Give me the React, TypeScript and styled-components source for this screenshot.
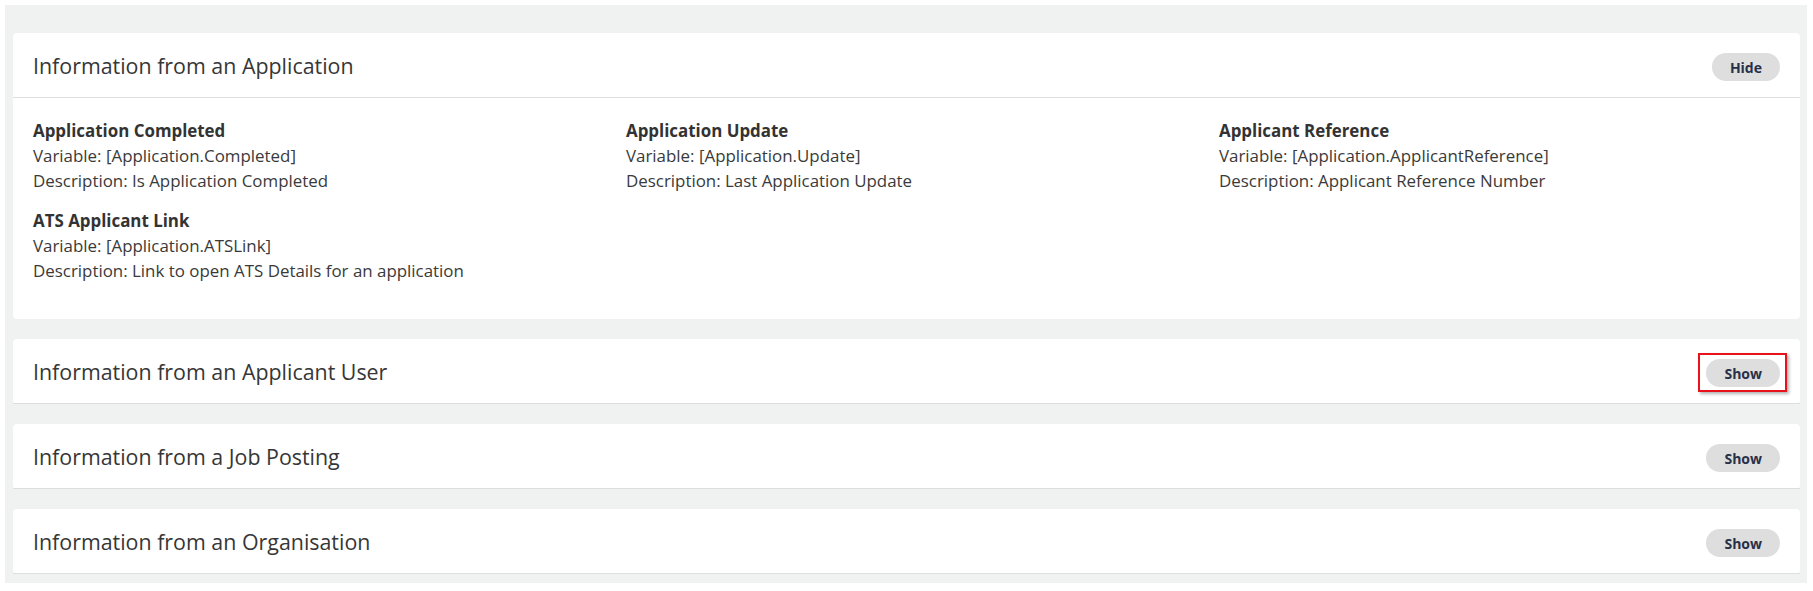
import { useState } from "react";
import styled, { createGlobalStyle } from "styled-components";

const GlobalStyle = createGlobalStyle`
  html, body {
    margin: 0;
    padding: 0;
    background: #ffffff;
  }
  body {
    font-family: "Open Sans", "Liberation Sans", sans-serif;
    color: #333333;
  }
`;

const Page = styled.div`
  padding: 5px 6px 8px 5px;
`;

const Panel = styled.div`
  background: #f0f1f1;
  padding: 28px 7px 9px 8px;
  display: flex;
  flex-direction: column;
  gap: 20px;
`;

const Card = styled.section`
  background: #ffffff;
  border-radius: 4px;
`;

const CardHeader = styled.div`
  height: 64px;
  padding: 0 20px;
  display: flex;
  align-items: center;
  justify-content: space-between;
  border-bottom: 1px solid #dcdedf;
`;

const CardTitle = styled.h2`
  margin: 0;
  font-size: 21.4px;
  font-weight: 400;
  color: #363636;
`;

const ToggleWrap = styled.span<{ $highlight?: boolean }>`
  position: relative;
  display: inline-flex;
  margin-top: 4px;

  ${({ $highlight }) =>
    $highlight &&
    `
    &::after {
      content: "";
      position: absolute;
      top: -6px;
      bottom: -5px;
      left: -8px;
      right: -7px;
      border: 2px solid #e8121b;
      box-shadow: 2px 2px 3px rgba(0, 0, 0, 0.3);
      pointer-events: none;
    }
  `}
`;

const ToggleButton = styled.button`
  height: 28px;
  padding: 0 18px;
  border: none;
  border-radius: 15px;
  background: #dedede;
  color: #283049;
  font-family: "Open Sans", "Liberation Sans", sans-serif;
  font-size: 14px;
  font-weight: 700;
  cursor: pointer;
`;

const CardBody = styled.div`
  padding: 20px 20px 36px;
  display: grid;
  grid-template-columns: repeat(3, 1fr);
  column-gap: 32px;
  row-gap: 15px;
`;

const Field = styled.div`
  display: flex;
  flex-direction: column;
  font-size: 16.9px;
  line-height: 25px;
  color: #3a3a3a;
`;

const FieldName = styled.div`
  font-weight: 700;
  color: #333333;
`;

type Variable = { name: string; key: string; description: string };

type Section = {
  title: string;
  variables: Variable[];
  highlight?: boolean;
};

const sections: Section[] = [
  {
    title: "Information from an Application",
    variables: [
      {
        name: "Application Completed",
        key: "Application.Completed",
        description: "Is Application Completed",
      },
      {
        name: "Application Update",
        key: "Application.Update",
        description: "Last Application Update",
      },
      {
        name: "Applicant Reference",
        key: "Application.ApplicantReference",
        description: "Applicant Reference Number",
      },
      {
        name: "ATS Applicant Link",
        key: "Application.ATSLink",
        description: "Link to open ATS Details for an application",
      },
    ],
  },
  { title: "Information from an Applicant User", variables: [], highlight: true },
  { title: "Information from a Job Posting", variables: [] },
  { title: "Information from an Organisation", variables: [] },
];

function InfoCard({ section, defaultOpen }: { section: Section; defaultOpen: boolean }) {
  const [open, setOpen] = useState(defaultOpen);

  return (
    <Card>
      <CardHeader>
        <CardTitle>{section.title}</CardTitle>
        <ToggleWrap $highlight={section.highlight}>
          <ToggleButton type="button" onClick={() => setOpen(!open)}>
            {open ? "Hide" : "Show"}
          </ToggleButton>
        </ToggleWrap>
      </CardHeader>
      {open && (
        <CardBody>
          {section.variables.map((v) => (
            <Field key={v.key}>
              <FieldName>{v.name}</FieldName>
              <span>Variable: [{v.key}]</span>
              <span>Description: {v.description}</span>
            </Field>
          ))}
        </CardBody>
      )}
    </Card>
  );
}

export default function App() {
  return (
    <>
      <GlobalStyle />
      <Page>
        <Panel>
          {sections.map((s, i) => (
            <InfoCard key={s.title} section={s} defaultOpen={i === 0} />
          ))}
        </Panel>
      </Page>
    </>
  );
}
